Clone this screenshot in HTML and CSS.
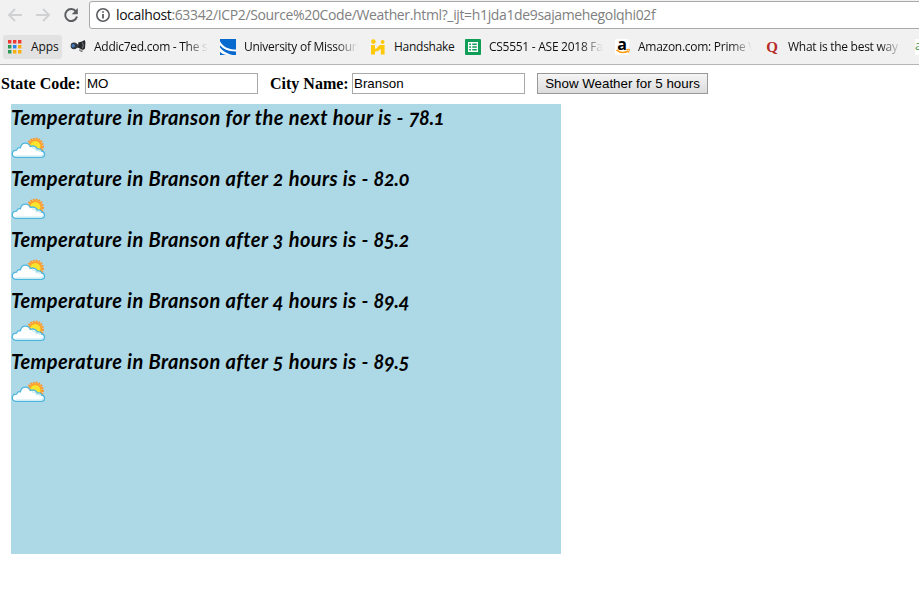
FILE: index.html
```html
<!DOCTYPE html>
<html lang="en">
<head>
<meta charset="utf-8">
<title>Weather</title>
<link rel="stylesheet" href="styles.css">
</head>
<body>
<svg class="defs" width="0" height="0" aria-hidden="true">
  <symbol id="cloud" viewBox="0 0 36 24">
    <circle cx="24.3" cy="10.2" r="7.7" fill="#ffc78a" stroke="#f7962a" stroke-width="1.8" stroke-dasharray="1.8 1"/>
    <circle cx="24.3" cy="10.2" r="6.9" fill="#f9a02d"/>
    <circle cx="24.3" cy="10.2" r="5.2" fill="#fbe52c"/>
    <path d="M5.5 21.3C2.8 21.3 1.3 19.7 1.3 17.7C1.3 15.4 3 14 5.6 14.1C6.2 12.2 7.7 11.4 9.4 11.8C10 8.6 12 7.1 14.4 7.1C16.9 7.1 18.5 8.2 19.3 10.5C22 9.3 25.7 10.3 26.3 13.1C28.6 12.3 30.2 13.3 30.6 15C32.7 15.2 33.5 16.5 33.5 18.2C33.5 20 32.2 21.3 30.2 21.3Z" fill="#fff" stroke="#4db6df" stroke-width="1.3"/>
    <path d="M5 20H30.2Q32.2 19.8 32.2 17.8M21 11.8Q24.6 11.8 25.2 14.6Q28.3 13.8 29.4 16" fill="none" stroke="#c5e9ef" stroke-width="1.2"/>
  </symbol>
</svg>
<header>
  <div class="toolbar">
    <svg class="back" width="16" height="16" viewBox="0 0 16 16"><path d="M15 8H2M8 2L2 8L8 14" fill="none" stroke="#d0d1d3" stroke-width="1.9"/></svg>
    <svg class="forward" width="16" height="16" viewBox="0 0 16 16"><path d="M1 8H14M8 2L14 8L8 14" fill="none" stroke="#d0d1d3" stroke-width="1.9"/></svg>
    <svg class="reload" width="16" height="16" viewBox="0 0 16 16"><path d="M13 4.4A6 6 0 1 0 14 9.6" fill="none" stroke="#5b5d61" stroke-width="2"/><path d="M14.8 1V7.2H8.7Z" fill="#5b5d61"/></svg>
    <div class="omnibox">
      <svg width="16" height="16" viewBox="0 0 16 16"><circle cx="8" cy="8" r="6.2" fill="none" stroke="#5b5d61" stroke-width="1.6"/><path d="M8 7V11.6M8 4.2V5.8" stroke="#5b5d61" stroke-width="1.8"/></svg>
      <span class="url"><b>localhost</b>:63342/ICP2/Source%20Code/Weather.html?_ijt=h1jda1de9sajamehegolqhi02f</span>
    </div>
  </div>
  <nav class="bookmarks">
    <a class="apps"><svg width="14" height="14" viewBox="0 0 14 14"><path d="M0 0h3.4v3.4H0zM5 0h3.4v3.4H5zM10 0h3.4v3.4H10z" fill="#ee3932"/><path d="M0 5h3.4v3.4H0zM0 10h3.4v3.4H0z" fill="#289a55"/><path d="M5 5h3.4v3.4H5z" fill="#2585ef"/><path d="M10 5h3.4v3.4H10zM5 10h3.4v3.4H5zM10 10h3.4v3.4H10z" fill="#f9b00c"/></svg><span>Apps</span></a>
    <a class="mark addic"><svg width="16" height="16" viewBox="0 0 16 16"><circle cx="4" cy="6.8" r="3.4" fill="#30373f"/><circle cx="3.2" cy="6.8" r="1.8" fill="#4379c4"/><path d="M6 5L9 5.5V9L6 8.6Z" fill="#33383e"/><path d="M8.2 3.6L12 2.4L14.6 1L15.4 3L15 9.6L13 11L8.8 9Z" fill="#24272b"/><path d="M12.4 3.5L13.3 6L12.6 9.4" fill="none" stroke="#85878b" stroke-width="1"/><path d="M9 11.2H12.5M10.5 12.5H12.5" stroke="#777" stroke-width="1.2"/></svg><span class="fade">Addic7ed.com - The s</span></a>
    <a class="mark univ"><svg width="16" height="16" viewBox="0 0 16 16"><path d="M0 0h16v16H0z" fill="#0869cf"/><path d="M0 2.2C3 7.6 8 10.4 16 10.6V12.4C8 12.2 3 10 0 6.2ZM0 8.5C3.3 12.6 7 14.4 12.5 16H6.5C3.3 15.4 1 14.3 0 12.8Z" fill="#fff"/></svg><span class="fade">University of Missouri</span></a>
    <a class="mark hand"><svg width="16" height="16" viewBox="0 0 16 16"><circle cx="3.4" cy="2.6" r="2.3" fill="#ffc90b"/><circle cx="12.6" cy="3" r="1.9" fill="#ffc90b"/><path d="M1 6H5V10Q7 9.6 8 7.5L10 6H14.6V15.5H10.8V9.8Q8.5 12.8 5 12.6V15.5H1Z" fill="#ffc90b"/></svg><span>Handshake</span></a>
    <a class="mark course"><svg width="16" height="16" viewBox="0 0 16 16"><rect width="16" height="16" rx="1" fill="#0f9d58"/><path d="M3 3H13V13H3Z" fill="#fff"/><path d="M4.2 4.5H6V6H4.2zM7.3 4.5H11.8V6H7.3zM4.2 7.3H6V8.8H4.2zM7.3 7.3H11.8V8.8H7.3zM4.2 10.1H6V11.6H4.2zM7.3 10.1H11.8V11.6H7.3z" fill="#0f9d58"/></svg><span class="fade">CS5551 - ASE 2018 Fa</span></a>
    <a class="mark amazon"><span class="amazon-logo">a<svg width="16" height="16" viewBox="0 0 16 16"><path d="M1.5 10.8Q7 15.6 13 12" fill="none" stroke="#ff9d16" stroke-width="1.6"/><path d="M11.2 10.8Q15 9.6 14.2 11.4L13.2 13.7" fill="none" stroke="#ff9d16" stroke-width="1.1"/></svg></span><span class="fade">Amazon.com: Prime V</span></a>
    <a class="mark quora"><span class="quora-logo">Q</span><span class="fade">What is the best way</span></a>
    <span class="next">a</span>
  </nav>
</header>
<main>
  <form>
    <label for="state">State Code:</label>
    <input id="state" type="text" value="MO">
    <label class="city" for="city">City Name:</label>
    <input id="city" type="text" value="Branson">
    <button type="button">Show Weather for 5 hours</button>
  </form>
  <section class="forecast">
    <div class="hour"><p>Temperature in Branson for the next hour is - <span>78.1</span></p><svg><use href="#cloud"/></svg></div>
    <div class="hour"><p>Temperature in Branson after 2 hours is - <span>82.0</span></p><svg><use href="#cloud"/></svg></div>
    <div class="hour"><p>Temperature in Branson after 3 hours is - <span>85.2</span></p><svg><use href="#cloud"/></svg></div>
    <div class="hour"><p>Temperature in Branson after 4 hours is - <span>89.4</span></p><svg><use href="#cloud"/></svg></div>
    <div class="hour"><p>Temperature in Branson after 5 hours is - <span>89.5</span></p><svg><use href="#cloud"/></svg></div>
  </section>
</main>
</body>
</html>
```
FILE: styles.css
```css
* { box-sizing: border-box; }
html, body { margin: 0; height: 100%; overflow: hidden; background: #fff; }
.defs { display: block; height: 0; }
svg { display: block; flex: none; }
header { height: 65px; background: #f1f1f1; border-bottom: 1px solid #b5b5b5; font-family: "Open Sans", sans-serif; }
.toolbar { display: flex; height: 30px; padding: 1px 0 0 7px; }
.toolbar > svg { margin-top: 6px; }
.forward { margin-left: 12px; }
.reload { margin-left: 12px; }
.omnibox { display: flex; align-items: center; height: 28px; width: 840px; flex: none; margin-left: 10px; padding-left: 5px; background: #fff; border: 1px solid #a9a9a9; border-radius: 3px 0 0 3px; }
.url { margin-left: 5px; font-size: 14px; line-height: 20px; letter-spacing: -0.36px; color: #808080; white-space: nowrap; }
.url b { font-weight: 400; color: #111; }
.bookmarks { display: flex; align-items: center; height: 34px; padding-left: 3px; font-size: 12px; line-height: 16px; letter-spacing: -0.27px; color: #111; overflow: hidden; }
.apps { display: flex; align-items: center; width: 59px; height: 24px; padding-left: 5px; background: #e2e2e2; border-radius: 3px; flex: none; letter-spacing: -0.1px; }
.apps span { margin-left: 9px; }
.mark { display: flex; align-items: center; gap: 8px; flex: none; white-space: nowrap; }
.fade { -webkit-mask-image: linear-gradient(to right, #000 calc(100% - 22px), transparent); mask-image: linear-gradient(to right, #000 calc(100% - 22px), transparent); flex: none; width: 114px; }
.addic { margin-left: 8px; width: 138px; }
.univ { margin-left: 12px; width: 137px; }
.hand { margin-left: 13px; width: 85px; }
.course { margin-left: 10px; width: 137px; }
.amazon { margin-left: 13px; width: 137px; }
.amazon .fade { margin-left: 1px; }
.quora { margin-left: 13px; width: 137px; }
.quora .fade { margin-left: 1px; }
.amazon-logo { position: relative; width: 16px; height: 16px; background: #fff; border-radius: 2px; font: bold 16px/10px "Open Sans", sans-serif; text-align: center; letter-spacing: 0; color: #000; }
.amazon-logo svg { position: absolute; left: 0; top: 0; }
.quora-logo { width: 16px; font: bold 15px/16px "Liberation Serif", serif; color: #b92b27; text-align: center; letter-spacing: 0; }
.next { width: 10px; height: 16px; margin-left: 13px; background: #fff; color: #3c934a; font-size: 12px; line-height: 14px; }
form { display: flex; align-items: center; height: 21px; margin: 8px 0 0 1px; font: bold 16px/18px "Liberation Serif", serif; white-space: nowrap; }
label { width: 84px; flex: none; }
.city { margin-left: 12px; width: 82px; }
input { width: 173px; height: 21px; flex: none; padding: 1px; border: 1px solid #a9a9a9; font: 13.33px "Liberation Sans", sans-serif; color: #000; }
button { width: 171px; height: 21px; flex: none; margin-left: 12px; padding: 0; border: 1px solid #999; border-radius: 0; background: linear-gradient(#f5f5f5, #dcdcdc); font: 13.33px "Liberation Sans", sans-serif; color: #000; }
.forecast { width: 550px; height: 450px; margin: 10px 0 0 11px; background: #add8e6; }
.hour { height: 61px; }
.hour p { margin: 0; height: 32px; font: italic bold 20px/26px Lato, sans-serif; font-variant-numeric: oldstyle-nums; letter-spacing: 0.4px; white-space: nowrap; }
.hour p span { letter-spacing: -0.4px; }
.hour svg { width: 36px; height: 24px; }
```
